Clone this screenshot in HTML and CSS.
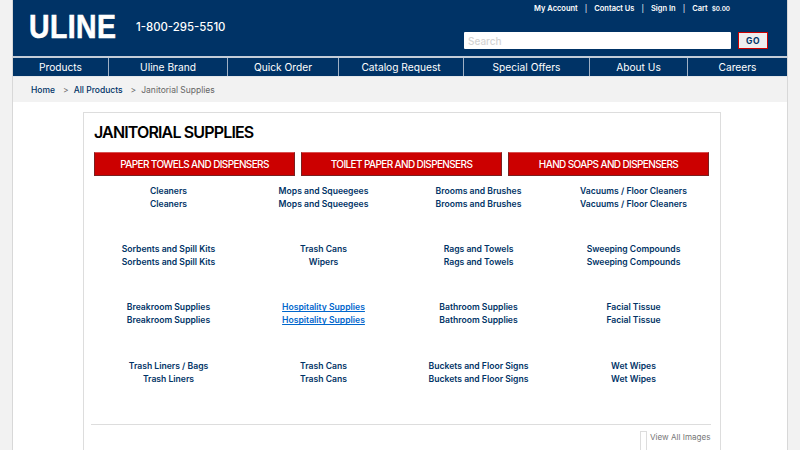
FILE: index.html
```html
<!DOCTYPE html>
<html lang="en">
<head>
<meta charset="utf-8">
<title>Janitorial Supplies - Uline</title>
<link rel="stylesheet" href="styles.css">
</head>
<body>
<div class="page">
  <header class="header">
    <div class="brand">
      <span class="logo">ULINE</span>
      <span class="phone">1-800-295-5510</span>
    </div>
    <div class="tools">
      <div class="toplinks">
        <a>My Account</a><i>|</i><a>Contact Us</a><i>|</i><a>Sign In</a><i>|</i><a>Cart</a><small>$0.00</small>
      </div>
      <div class="search">
        <div class="search-input">Search</div>
        <div class="go">GO</div>
      </div>
    </div>
  </header>
  <nav class="nav">
    <a class="n1">Products</a><a class="n2">Uline Brand</a><a class="n3">Quick Order</a><a class="n4">Catalog Request</a><a class="n5">Special Offers</a><a class="n6">About Us</a><a class="n7">Careers</a>
  </nav>
  <div class="crumbs">
    <a>Home</a><span>&gt;</span><a>All Products</a><span>&gt;</span><em>Janitorial Supplies</em>
  </div>
  <main class="card">
    <h1>JANITORIAL SUPPLIES</h1>
    <div class="buttons">
      <div class="btn">PAPER TOWELS AND DISPENSERS</div>
      <div class="btn">TOILET PAPER AND DISPENSERS</div>
      <div class="btn">HAND SOAPS AND DISPENSERS</div>
    </div>
    <div class="grid">
      <div class="item"><a>Cleaners</a><a>Cleaners</a></div>
      <div class="item"><a>Mops and Squeegees</a><a>Mops and Squeegees</a></div>
      <div class="item"><a>Brooms and Brushes</a><a>Brooms and Brushes</a></div>
      <div class="item"><a>Vacuums / Floor Cleaners</a><a>Vacuums / Floor Cleaners</a></div>
      <div class="item"><a>Sorbents and Spill Kits</a><a>Sorbents and Spill Kits</a></div>
      <div class="item"><a>Trash Cans</a><a>Wipers</a></div>
      <div class="item"><a>Rags and Towels</a><a>Rags and Towels</a></div>
      <div class="item"><a>Sweeping Compounds</a><a>Sweeping Compounds</a></div>
      <div class="item"><a>Breakroom Supplies</a><a>Breakroom Supplies</a></div>
      <div class="item hover"><a>Hospitality Supplies</a><a>Hospitality Supplies</a></div>
      <div class="item"><a>Bathroom Supplies</a><a>Bathroom Supplies</a></div>
      <div class="item"><a>Facial Tissue</a><a>Facial Tissue</a></div>
      <div class="item"><a>Trash Liners / Bags</a><a>Trash Liners</a></div>
      <div class="item"><a>Trash Cans</a><a>Trash Cans</a></div>
      <div class="item"><a>Buckets and Floor Signs</a><a>Buckets and Floor Signs</a></div>
      <div class="item"><a>Wet Wipes</a><a>Wet Wipes</a></div>
    </div>
    <div class="footer-row">
      <span class="check"></span>
      <span class="view">View All Images</span>
    </div>
  </main>
</div>
</body>
</html>
```
FILE: styles.css
```css
* { box-sizing: border-box; }
html, body { margin: 0; height: 450px; overflow: hidden; }
body {
  background: #f2f2f2;
  font-family: "Inter", "Liberation Sans", sans-serif;
  color: #003366;
}
.page {
  width: 776px;
  height: 450px;
  margin-left: 12px;
  background: #fff;
  border-left: 1px solid #d8d8d8;
  border-right: 1px solid #d8d8d8;
  overflow: hidden;
}
.header {
  height: 56px;
  background: #003366;
  display: flex;
  justify-content: space-between;
  color: #fff;
}
.brand { display: flex; align-items: center; padding-left: 16px; height: 52px; }
.logo {
  font-family: "Liberation Sans", sans-serif;
  font-weight: 700;
  font-size: 33px;
  line-height: 33px;
  letter-spacing: 0.5px;
  -webkit-text-stroke: 0.6px #fff;
  width: 107px;
  transform: scaleX(0.86);
  transform-origin: left center;
}
.phone { font-size: 11.4px; font-weight: 500; padding-top: 2px; }
.tools { width: 323px; display: flex; flex-direction: column; }
.toplinks {
  height: 32px;
  padding: 4px 0 0 70px;
  display: flex;
  font-size: 7.5px;
  font-weight: 600;
  line-height: 10px;
  white-space: nowrap;
}
.toplinks i { font-style: normal; margin: 0 7px; font-weight: 400; }
.toplinks small { font-size: 6.3px; margin-left: 4px; }
.search { display: flex; align-items: flex-start; }
.search-input {
  width: 267px;
  height: 17px;
  background: #fff;
  border-radius: 1px;
  color: #d4d4d4;
  font-size: 10px;
  font-weight: 500;
  line-height: 18px;
  padding-left: 4px;
}
.go {
  width: 30px;
  height: 17px;
  margin-left: 7px;
  background: #eee;
  border: 1px solid #cc0000;
  color: #003366;
  font-size: 8.5px;
  font-weight: 700;
  letter-spacing: 0.5px;
  line-height: 16px;
  text-align: center;
}
.nav {
  height: 21px;
  display: flex;
  background: #003366;
  border-top: 2px solid #c4cdd8;
  border-bottom: 1px solid #e4e8ec;
}
.nav a {
  color: #fff;
  font-size: 10.2px;
  line-height: 18px;
  text-align: center;
  border-right: 1px solid #9fb0c4;
}
.nav .n7 { border-right: 0; flex: 1; }
.n1 { width: 96px; }
.n2 { width: 119px; }
.n3 { width: 111px; }
.n4 { width: 125px; }
.n5 { width: 126px; }
.n6 { width: 98px; }
.crumbs {
  height: 25px;
  background: #f2f2f2;
  padding-left: 18px;
  display: flex;
  align-items: center;
  font-size: 8.5px;
  font-weight: 500;
  white-space: nowrap;
}
.crumbs span { color: #666; margin: 0 5px 0 8px; font-weight: 400; }
.crumbs em { color: #666; font-style: normal; font-weight: 400; }
.card {
  width: 638px;
  height: 400px;
  margin: 10px 0 0 70px;
  border: 1px solid #ddd;
  padding: 9px 7px 0;
}
h1 {
  margin: 0 0 0 3px;
  color: #000;
  font-size: 16px;
  font-weight: 600;
  letter-spacing: -0.85px;
  line-height: 20px;
  height: 21px;
}
.buttons { display: flex; gap: 6px; margin: 9px 0 0 3px; }
.btn {
  width: 201px;
  height: 24px;
  background: #cc0000;
  border: 1px solid #7a2020;
  border-top-color: #d85050;
  color: #fff;
  font-size: 10px;
  font-weight: 500;
  letter-spacing: -0.62px;
  line-height: 22px;
  text-align: center;
}
.grid {
  display: grid;
  grid-template-columns: repeat(4, 155px);
  grid-auto-rows: 58.2px;
  margin: 9px 0 0 0;
  width: 620px;
}
.item { display: flex; flex-direction: column; align-items: center; font-size: 8.6px; font-weight: 600; line-height: 13px; }
.hover a { color: #0066cc; text-decoration: underline; }
.footer-row {
  margin-top: 6px;
  width: 620px;
  border-top: 1px solid #ddd;
  padding-top: 6px;
  display: flex;
  justify-content: flex-end;
  align-items: flex-start;
}
.check { width: 7px; height: 20px; border: 1px solid #ddd; margin-right: 3px; }
.view { color: #777; font-size: 8.1px; line-height: 13px; width: 61px; white-space: nowrap; }
```
